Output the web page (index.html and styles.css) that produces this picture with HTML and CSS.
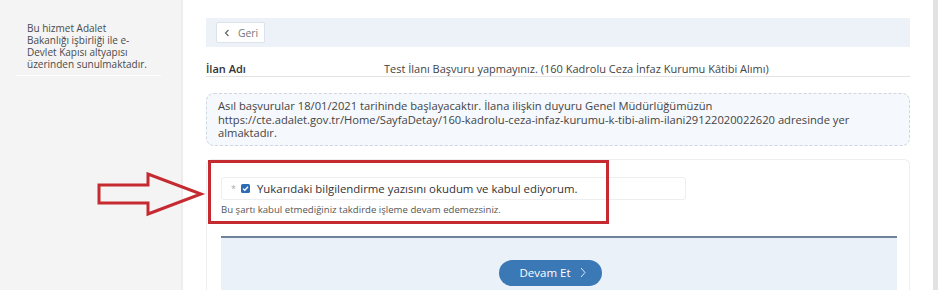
FILE: index.html
```html
<!DOCTYPE html>
<html lang="tr">
<head>
<meta charset="utf-8">
<title>Başvuru</title>
<link rel="stylesheet" href="styles.css">
</head>
<body>
<div class="page">
  <aside class="sidebar">
    <p class="side-note">Bu hizmet Adalet<br>Bakanlığı işbirliği ile e-<br>Devlet Kapısı altyapısı<br>üzerinden sunulmaktadır.</p>
    <div class="side-rule"></div>
  </aside>
  <main class="main">
    <div class="top-edge"></div>
    <div class="content">
      <div class="back-bar">
        <button class="back-btn" type="button">
          <svg class="back-icon" width="6" height="8" viewBox="0 0 6 8"><path d="M4.5 1 L1.5 4 L4.5 7" fill="none" stroke="#666" stroke-width="1.2"/></svg>
          <span>Geri</span>
        </button>
      </div>
      <div class="info-row">
        <div class="info-label">İlan Adı</div>
        <div class="info-value">Test İlanı Başvuru yapmayınız. (160 Kadrolu Ceza İnfaz Kurumu Kâtibi Alımı)</div>
      </div>
      <div class="notice">Asıl başvurular 18/01/2021 tarihinde başlayacaktır. İlana ilişkin duyuru Genel Müdürlüğümüzün https://cte.adalet.gov.tr/Home/SayfaDetay/160-kadrolu-ceza-infaz-kurumu-k-tibi-alim-ilani29122020022620 adresinde yer almaktadır.</div>
      <div class="consent-card">
        <div class="consent-field">
          <span class="req">*</span>
          <span class="checkbox"><svg width="9" height="9" viewBox="0 0 9 9"><path d="M2 4.6 L3.8 6.3 L7 2.8" fill="none" stroke="#fff" stroke-width="1.3"/></svg></span>
          <span class="consent-text">Yukarıdaki bilgilendirme yazısını okudum ve kabul ediyorum.</span>
        </div>
        <div class="consent-help">Bu şartı kabul etmediğiniz takdirde işleme devam edemezsiniz.</div>
        <div class="highlight-box"></div>
        <div class="footer">
          <button class="next-btn" type="button">Devam Et
            <svg width="6" height="11" viewBox="0 0 6 11"><path d="M1 1 L5 5.5 L1 10" fill="none" stroke="#dfe9f5" stroke-width="1"/></svg>
          </button>
        </div>
      </div>
    </div>
  </main>
  <div class="edge-strip"></div>
</div>
<svg class="pointer-arrow" width="110" height="48" viewBox="0 0 110 48">
  <path d="M2 13 L51 13 L51 2 L104 22 L51 42 L51 31 L2 31 Z" fill="none" stroke="#c52a31" stroke-width="3" stroke-linejoin="miter"/>
</svg>
</body>
</html>
```

FILE: styles.css
```css
* { box-sizing: border-box; }
html, body { margin: 0; padding: 0; }
body {
  width: 938px;
  height: 290px;
  overflow: hidden;
  background: #f4f4f4;
  font-family: "Open Sans", "Noto Sans", sans-serif;
  color: #444;
  position: relative;
}
.page {
  display: flex;
  height: 290px;
}
.sidebar {
  width: 181px;
  flex: none;
  background: #f4f4f4;
  padding: 22px 0 0 0;
}
.side-note {
  margin: 0;
  padding-left: 27px;
  font-size: 10px;
  line-height: 12px;
  color: #4a4a4a;
}
.side-rule {
  margin: 5px 20px 0 16px;
  height: 1px;
  background: #ffffff;
}
.main {
  flex: 1;
  background: #fff;
  border-left: 2px solid #ececec;
  display: flex;
  flex-direction: column;
}
.top-edge {
  height: 4px;
  background: #f6f6f6;
  box-shadow: 0 1px 2px rgba(0,0,0,0.06);
}
.content {
  padding: 18px 23px 0 23px;
}
.back-bar {
  height: 29px;
  background: #edf2f9;
  display: flex;
  align-items: center;
  padding-left: 10px;
}
.back-btn {
  display: flex;
  align-items: center;
  gap: 8px;
  height: 21px;
  width: 49px;
  padding: 0 0 0 7px;
  background: #fff;
  border: 1px solid #dde3ea;
  border-radius: 2px;
  font-family: inherit;
  font-size: 10.3px;
  color: #777;
}
.info-row {
  display: flex;
  padding-top: 14px;
  line-height: 15px;
  font-size: 11px;
  border-bottom: 1px solid #e3e3e3;
}
.info-label {
  width: 178px;
  font-weight: 600;
  color: #333;
}
.info-value {
  color: #444;
}
.notice {
  margin-top: 16px;
  padding: 5px 11px;
  border: 1px dashed #cfd6df;
  border-radius: 8px;
  background: #f5f8fc;
  font-size: 11.2px;
  line-height: 13.5px;
  color: #444;
}
.consent-card {
  position: relative;
  margin-top: 13px;
  border: 1px solid #efefef;
  border-bottom: none;
  border-radius: 6px 6px 0 0;
  padding: 17px 12px 0 14px;
}
.consent-field {
  width: 465px;
  height: 23px;
  border: 1px solid #eeeeee;
  border-radius: 3px;
  display: flex;
  align-items: center;
  padding-left: 9px;
}
.req {
  font-size: 9px;
  color: #aaa;
  margin-right: 5px;
}
.checkbox {
  width: 9px;
  height: 9px;
  background: #2d6cb4;
  border-radius: 1.5px;
  display: flex;
  margin-right: 7px;
}
.consent-text {
  font-size: 11.4px;
  color: #333;
}
.consent-help {
  margin-top: 3px;
  font-size: 9.6px;
  line-height: 13px;
  color: #555;
}
.highlight-box {
  position: absolute;
  left: 1px;
  top: 0px;
  width: 401px;
  height: 64px;
  border: 3px solid #c52a31;
}
.footer {
  margin: 20px 0 0 0;
  border-top: 2px solid #6f8398;
  background: #eaf1f9;
  height: 60px;
  display: flex;
  justify-content: center;
  padding-top: 22px;
}
.next-btn {
  height: 26px;
  width: 103px;
  border: none;
  border-radius: 13px;
  background: #3b78b6;
  color: #fff;
  font-family: inherit;
  font-size: 11.5px;
  display: flex;
  align-items: center;
  justify-content: center;
  gap: 9px;
  padding: 0 0 0 4px;
  margin-right: 17px;
}
.edge-strip {
  width: 5px;
  flex: none;
  background: #e2e2e5;
}
.pointer-arrow {
  position: absolute;
  left: 97px;
  top: 172px;
}
```
